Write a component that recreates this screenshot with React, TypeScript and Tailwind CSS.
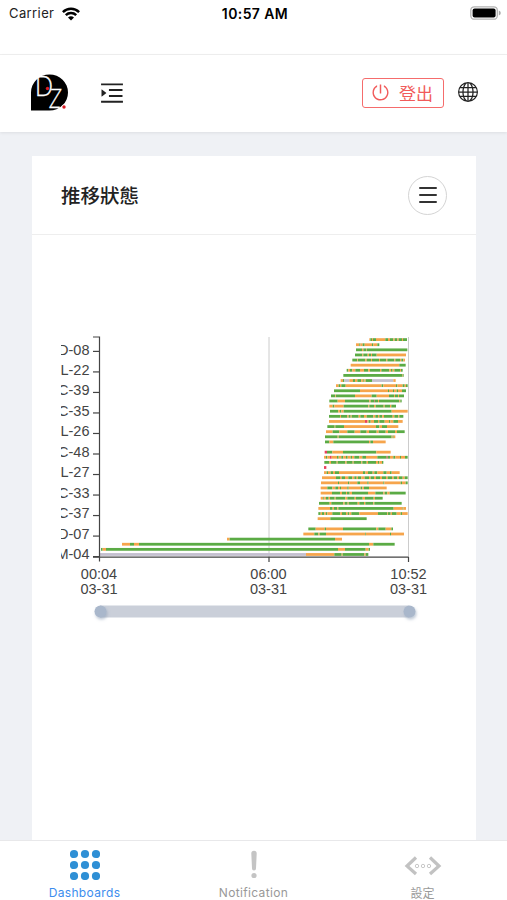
import { AiOutlineMenuUnfold, AiOutlinePoweroff } from 'react-icons/ai';
import { BsGlobe } from 'react-icons/bs';

const COLORS: Record<string, string> = {
  G: '#5bab45',
  O: '#f6a54c',
  P: '#c4c0cf',
  R: '#e8405c',
};

// "start C end C end ..." in thirds of a pixel, counted from x = 240 of the chart
const ROWS = [
  '208 O 211 G 216 O 219 G 228 O 256 G 264 O 270 G 280 O 284 G 292 O 296 G 306 O 309 G 321',
  '168 O 178 G 181 O 188 G 194 O 216 G 220 O 232 G 238',
  '168 G 186 O 190 G 198 O 200 G 322',
  '165 G 187 O 190 G 203 O 207 G 213 O 216 G 230 O 318',
  '157 G 172 O 174 G 196 O 200 G 213 O 216 G 237 O 240 G 259 O 262 G 283 O 286 G 300 O 304 G 310 O 315',
  '152 O 298 G 317',
  '140 G 145 O 150 G 157 O 166 G 180 O 192 G 205 O 210 G 240 O 244 G 268 O 273 G 278 O 283 G 300 O 303 G 308',
  '130 G 306 O 308 G 311',
  '122 O 129 G 133 P 148 O 159 G 165 O 172 G 184 O 190 G 193 O 197 G 216 P 280 O 287',
  '108 O 116 G 120 O 124 G 137 O 245 G 250 O 288 G 292 O 308 G 314 O 318 G 323',
  '102 G 180 O 264 G 267 O 279 G 282 O 290 G 294 O 306 G 318',
  '93 G 106 O 108 G 165 O 215 G 230 O 267 G 282 O 285 G 294 O 297 G 312',
  '88 G 113 O 135 G 208 O 212 G 222 R 224 G 234 O 237 G 298 O 301 G 305',
  '88 O 98 G 103 O 131 G 205 O 208 G 222 O 227 G 251 O 254 G 270 O 274 G 288',
  '90 G 115 O 120 G 124 O 131 G 275 O 323',
  '87 G 120 O 123 G 142 O 146 G 152 O 155 G 176 O 181 G 192 O 200 G 220 O 226 G 234 O 238 G 247 O 252 G 278 O 283 G 295 O 298 G 310',
  '87 O 195 R 202 O 206 G 212 O 222 G 234 O 238 G 254 O 267 G 271 O 280 G 294 O 308',
  '82 G 104 O 106 G 132 O 228 G 238 O 246 G 261 O 295',
  '78 O 98 G 118 O 142 G 164 O 181 G 200 O 207 G 230 O 236 G 257 O 264 G 285 O 291 G 314',
  '75 G 113 O 116 G 275 O 278 G 281 O 286',
  '75 G 88 O 100 G 207 O 211 G 219 O 257',
  '',
  '74 R 81 G 97 O 129 G 229 O 272',
  '72 O 78 G 82 O 90 R 95 O 111 G 116 O 124 G 130 O 138 G 143 O 152 G 156 O 163 G 178 O 187 G 198 O 232 G 260 R 263 G 270 O 280 G 286 O 300 G 303 O 315 G 323',
  '73 G 88 O 93 G 110 O 113 G 136 O 140 G 158 O 161 G 184 O 187 G 200 O 204 G 228 O 234 G 238 O 246 G 250',
  '72 R 79',
  '72 O 80 G 84 O 92 G 99 O 105 G 117 O 189 G 196 O 204 G 218 O 223 G 232 O 250 G 260 O 270 G 275 O 299',
  '66 O 108 G 120 O 125 G 135 O 145 G 157 O 163 G 170 O 174 G 184 O 194 G 207 O 212 G 222 O 228 G 240 O 246 G 258 O 263 G 276 O 281 G 292 O 297 G 308 O 314 G 323',
  '63 O 114 G 117 O 144 G 148 O 172 G 180 O 202 G 206 O 250 G 253 O 302 G 306 O 317 G 323',
  '62 O 82 G 97 O 106 G 114 O 120 G 123 O 142 G 146 O 182 G 187 O 192 G 207 O 260',
  '62 O 96 G 120 O 126 G 138 O 141 G 149 O 156 G 204 O 226 G 250 O 254 G 262 O 269 G 317',
  '62 O 70 G 73 O 78 G 86 O 90 G 104 O 107 G 136 O 142 G 164 O 168 G 188 O 195 G 221 O 225 G 248',
  '57 G 89 O 94 G 130 O 134 G 143 O 146 G 173 O 178 G 192 O 196 G 220 O 223 G 305',
  '55 O 90 G 98 O 102 G 112 O 115 G 281 O 308 G 310 O 318',
  '55 G 62 O 66 G 73 O 78 G 82 O 97 G 121 O 126 G 138 O 143 G 148 O 154 G 178 O 234 G 262 O 264 G 272 O 276 G 290 O 302 G 306 O 323',
  '53 O 91 G 200',
  '',
  '25 G 47 O 74 G 78 O 129 G 229 O 235 G 257 O 274 G 279',
  '10 O 43 G 55 O 59 G 78 O 196 G 198 O 270 G 273 O 312',
  '-219 O -211 G 105 O 126',
  '-534 O -510 G -498 O -483 G 207 O 220 G 284',
  '-597 G -592 O -582 G 114 O 135 G 197 O 206 G 210',
  '-600 P 18 O 103 G 125 O 128 G 193 O 197 G 205',
];

const Y_LABELS = ['D-08', 'L-22', 'C-39', 'C-35', 'L-26', 'C-48', 'L-27', 'C-33', 'C-37', 'D-07', 'M-04'];

const X_TICKS = [
  { x: 39, time: '00:04' },
  { x: 208.5, time: '06:00' },
  { x: 348.5, time: '10:52' },
];

function Bars() {
  return (
    <g>
      {ROWS.map((row, i) => {
        const parts = row.split(' ');
        const bars = [];
        for (let k = 0; k + 2 < parts.length; k += 2) {
          const from = 240 + Number(parts[k]) / 3;
          const to = 240 + Number(parts[k + 2]) / 3;
          bars.push(
            <rect key={k} x={from} y={5.2 + i * 5.116} width={to - from} height={2.8} fill={COLORS[parts[k + 1]]} />
          );
        }
        return <g key={i}>{bars}</g>;
      })}
    </g>
  );
}

function StatusChart() {
  return (
    <svg width="386" height="300" viewBox="1 0 386 300" className="block font-['Liberation_Sans',sans-serif] text-[14.5px]" fill="#444">
      <defs>
        <filter id="knob" x="-50%" y="-50%" width="200%" height="200%">
          <feDropShadow dx="1" dy="2" stdDeviation="1.5" floodColor="#8fa0b8" floodOpacity="0.6" />
        </filter>
      </defs>
      <path d="M209 4v220M348.5 4v220" stroke="#ccc" />
      <Bars />
      <path d="M39.5 3.5v225M33 4h6.5M33 224.2h315.5M209 224v5M348.5 224v5" stroke="#444" strokeWidth="1.2" fill="none" />
      {Y_LABELS.map((label, i) => (
        <g key={label}>
          <path d={`M33 ${18.4 + i * 20.52}h6`} stroke="#444" strokeWidth="1.2" />
          <text x="29.5" y={21.5 + i * 20.46} textAnchor="end">{label}</text>
        </g>
      ))}
      {X_TICKS.map((tick) => (
        <g key={tick.time} textAnchor="middle">
          <text x={tick.x} y="246">{tick.time}</text>
          <text x={tick.x} y="260.5">03-31</text>
        </g>
      ))}
      <rect x="40" y="272.5" width="309" height="12" fill="#cacfd9" />
      <circle cx="40.5" cy="278.5" r="6" fill="#a9b7cb" filter="url(#knob)" />
      <circle cx="349.5" cy="278.5" r="6" fill="#a9b7cb" filter="url(#knob)" />
    </svg>
  );
}

function Logo() {
  return (
    <svg width="38" height="38" viewBox="0 0 38 38" className="overflow-visible font-['Lato',sans-serif]">
      <path d="M0 36.500V18.500A18.500 18 0 1 1 18.500 36.500z" fill="#000" />
      <text transform="translate(4 22.300) scale(.84 1)" fontSize="28" fontWeight="300" fill="#fff" stroke="#fff" strokeWidth=".4">D</text>
      <text transform="translate(17.800 33.700) skewX(-5) scale(.72 1)" fontSize="27" fontWeight="300" fill="#fff" stroke="#fff" strokeWidth=".4">Z</text>
      <circle cx="16.500" cy="14.500" r="1.700" fill="#d91b24" />
      <circle cx="33" cy="33" r="2.500" fill="#fff" />
      <circle cx="33" cy="33" r="1.700" fill="#d91b24" />
    </svg>
  );
}

function StatusBar() {
  return (
    <div className="h-[55px] shrink-0 border-b border-[#f0f0f0] font-['Inter',sans-serif] text-[13px] text-[#222]">
      <div className="grid grid-cols-3 items-center h-[27px] pl-[9px] pr-[6px]">
        <div className="flex items-center gap-[8px]">
          <span className="tracking-[0.4px]">Carrier</span>
          <svg width="18" height="14" viewBox="0 0 18 14" fill="none" stroke="#000" strokeWidth="2.500">
            <path d="M.9 5.100a11.700 11.700 0 0 1 16.200 0M3.800 8.200a7.500 7.500 0 0 1 10.400 0" />
            <path d="M9 13.600L6 10.600a4.300 4.300 0 0 1 6 0z" fill="#000" stroke="none" />
          </svg>
        </div>
        <span className="text-center font-semibold text-black text-[14px] tracking-[0.4px] whitespace-nowrap">10:57 AM</span>
        <svg width="31" height="14" viewBox="0 0 31 14" className="justify-self-end -mt-px">
          <rect x=".8" y=".8" width="26.500" height="12.400" rx="3.500" fill="#fff" stroke="#b3b3b3" strokeWidth="1.300" />
          <rect x="2.600" y="2.500" width="23" height="9" rx="2" fill="#000" />
          <path d="M28.800 4.500v5q2-.7 2-2.500t-2-2.500" fill="#aaa" />
        </svg>
      </div>
    </div>
  );
}

function Header() {
  return (
    <header className="h-[77px] shrink-0 flex items-center pl-[31px] pr-[29px] pb-px bg-white shadow-[0_1px_3px_rgba(0,0,0,0.08)] z-10">
      <Logo />
      <AiOutlineMenuUnfold size={28} className="ml-[29px] text-[#222]" />
      <button className="ml-auto w-[82px] h-[30px] flex items-center justify-center gap-[9px] pr-[2px] pb-px rounded-[3px] border-[1.500px] border-[#f56c6c] text-[#f15b5b] text-[17px] font-['Noto_Sans_CJK_TC',sans-serif]">
        <AiOutlinePoweroff size={19} />
        <span className="leading-none">登出</span>
      </button>
      <BsGlobe size={20} className="ml-[14px] mb-[2px] text-[#222]" />
    </header>
  );
}

function TabBar() {
  return (
    <nav className="h-[60px] shrink-0 grid grid-cols-3 bg-white border-t border-[#e8e8ea] font-['Inter','Noto_Sans_CJK_TC',sans-serif] text-[12px] text-[#999]">
      <div className="flex flex-col items-center pt-2 text-[#3c8dee]">
        <svg width="30" height="31" viewBox="0 0 30 31" fill="#2e8fd5">
          {[4, 15, 26].map((y) => [4, 15, 26].map((x) => <circle key={`${x}-${y}`} cx={x} cy={y + 1} r="4.100" />))}
        </svg>
        <span className="mt-[4px] leading-[18px] tracking-[0.35px]">Dashboards</span>
      </div>
      <div className="flex flex-col items-center pt-2">
        <svg width="10" height="31" viewBox="0 0 10 31" fill="#c4c4c4">
          <path d="M2.300 4.500a2.700 2.700 0 0 1 5.400 0L7 19.500a2 2 0 0 1-4 0z" />
          <circle cx="5" cy="26.500" r="2.600" />
        </svg>
        <span className="mt-[4px] leading-[18px] tracking-[0.35px]">Notification</span>
      </div>
      <div className="flex flex-col items-center pt-2">
        <svg width="38" height="31" viewBox="0 0 38 31" fill="none" stroke="#c2c2c2">
          <path d="M12 8.500L3 17l9 8M26 8.500l9 8.500-9 8" strokeWidth="3.200" />
          <circle cx="13" cy="17" r="1.700" strokeWidth=".9" />
          <circle cx="19" cy="17" r="1.700" strokeWidth=".9" />
          <circle cx="25" cy="17" r="1.700" strokeWidth=".9" />
        </svg>
        <span className="mt-[5px] leading-[18px]">設定</span>
      </div>
    </nav>
  );
}

export default function App() {
  return (
    <div className="w-[507px] h-[900px] flex flex-col overflow-hidden bg-white">
      <StatusBar />
      <Header />
      <main className="flex-1 min-h-0 px-8 pt-6 bg-[#eff1f5] pr-[31px]">
        <section className="h-full bg-white">
          <div className="h-[79px] flex items-center justify-between pl-[29px] pr-[29px] border-b border-[#eee]">
            <h2 className="text-[19.500px] font-medium leading-none text-[#222] font-['Noto_Sans_CJK_TC',sans-serif]">推移狀態</h2>
            <button className="w-[39px] h-[39px] flex items-center justify-center rounded-full border border-[#d4d4d4]">
              <svg width="18" height="18" viewBox="0 0 18 18" stroke="#333" strokeWidth="2" strokeLinecap="round">
                <path d="M1 2h16M1 9h16M1 16h16" />
              </svg>
            </button>
          </div>
          <div className="pt-[98px] pl-[29px]">
            <StatusChart />
          </div>
        </section>
      </main>
      <TabBar />
    </div>
  );
}
